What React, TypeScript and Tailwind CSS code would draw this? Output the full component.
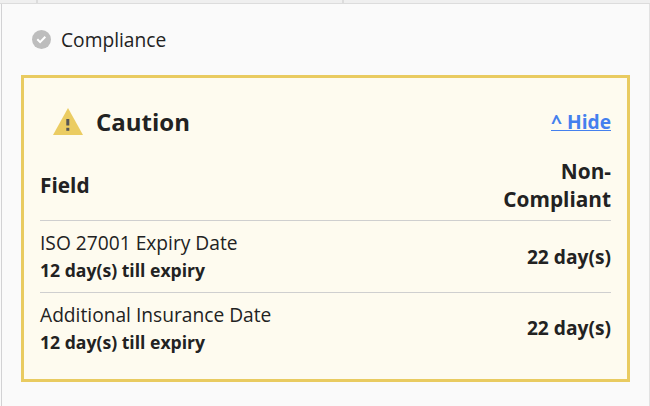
import { useState } from "react";

interface ComplianceRow {
  field: string;
  note: string;
  overdue: string;
}

const ROWS: ComplianceRow[] = [
  { field: "ISO 27001 Expiry Date", note: "12 day(s) till expiry", overdue: "22 day(s)" },
  { field: "Additional Insurance Date", note: "12 day(s) till expiry", overdue: "22 day(s)" },
];

function CheckIcon() {
  return (
    <svg viewBox="0 0 19 19" width="19" height="19" className="relative -top-px shrink-0">
      <circle cx="9.5" cy="9.5" r="9.5" fill="#bdbdbd" />
      <path d="M5.3 9.3l2.8 2.8 5.2-5.4" fill="none" stroke="#fff" strokeWidth="2" />
    </svg>
  );
}

function WarningIcon() {
  return (
    <svg viewBox="0 0 30 28" width="30" height="28" className="shrink-0">
      <path d="M15 0L30 27H0z" fill="#ebcc62" />
      <rect x="13.3" y="11" width="3" height="6.5" fill="#555" />
      <rect x="13.3" y="19.8" width="3" height="3" fill="#555" />
    </svg>
  );
}

export default function App() {
  const [open, setOpen] = useState(true);

  return (
    <div className="flex h-[406px] w-[650px] flex-col overflow-hidden bg-[#fafafa] font-['Open_Sans',sans-serif] text-[#222]">
      {/* Bottom edge of the tab strip */}
      <div className="flex h-1 shrink-0 border-b border-[#dcdcdc] bg-[#efefef]">
        <div className="w-[38px] border-r-2 border-[#dcdcdc]" />
        <div className="w-[306px] border-r-2 border-[#dcdcdc]" />
      </div>

      <div className="ml-px flex-1 border-x border-[#d2d2d4] border-r-[#e2e2e2] px-[19px] pt-[22px]">
        <div className="flex h-7 items-center gap-2.5 pl-[11px] text-[19.2px]">
          <CheckIcon />
          <span>Compliance</span>
        </div>

        {/* Caution panel */}
        <section className="mt-[21px] h-[307px] w-[609px] border-3 border-[#e9cb60] bg-[#fefbef] px-4 pt-[28px]">
          <div className="flex h-8 items-center justify-between">
            <div className="flex items-center gap-[13px] pl-[13px]">
              <WarningIcon />
              <h2 className="text-[24px] leading-8 font-bold">Caution</h2>
            </div>
            <button
              onClick={() => setOpen((o) => !o)}
              className="text-[19.2px] font-bold text-[#4480ee] underline decoration-1"
            >
              {open ? "^ Hide" : "Show"}
            </button>
          </div>

          {open && (
            <table className="mt-[12px] w-full leading-7">
              <thead>
                <tr className="border-b border-[#cfcfcf] text-[20.8px]">
                  <th className="pt-[7px] pb-[7px] text-left font-bold">Field</th>
                  <th className="w-[120px] pt-[7px] pb-[7px] text-right font-bold">Non-Compliant</th>
                </tr>
              </thead>
              <tbody>
                {ROWS.map((row) => (
                  <tr key={row.field} className="group border-b border-[#cfcfcf] last:border-b-0">
                    <td className="pt-2 pb-[9px] group-last:pb-[7px]">
                      <div className="text-[19.2px] leading-7">{row.field}</div>
                      <div className="text-[17.6px] leading-[26px] font-bold">{row.note}</div>
                    </td>
                    <td className="pt-2 pb-[7px] text-right text-[19.2px] font-bold">{row.overdue}</td>
                  </tr>
                ))}
              </tbody>
            </table>
          )}
        </section>
      </div>
    </div>
  );
}
